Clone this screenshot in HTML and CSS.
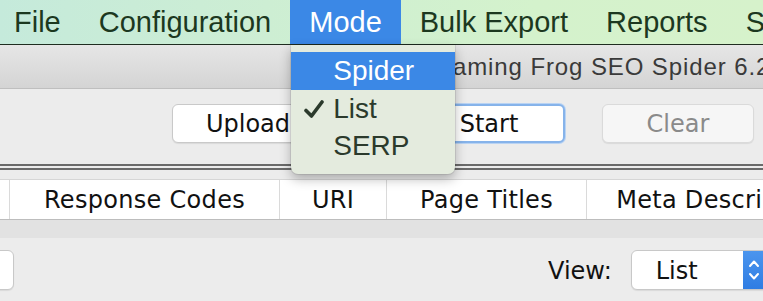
FILE: index.html
```html
<!DOCTYPE html>
<html>
<head>
<meta charset="utf-8">
<link rel="stylesheet" href="styles.css">
</head>
<body>
<div class="app">
  <nav class="menubar">
    <div class="mitem first">File</div>
    <div class="mitem">Configuration</div>
    <div class="mitem active">Mode
      <div class="dropdown">
        <div class="ditem hl"><span class="chk"></span>Spider</div>
        <div class="ditem"><span class="chk"><svg width="20" height="18" viewBox="0 0 20 18"><path d="M2 10.5 L7.5 16 L18 2" fill="none" stroke="#2b3a2c" stroke-width="3.6" stroke-linecap="round" stroke-linejoin="round"/></svg></span>List</div>
        <div class="ditem"><span class="chk"></span>SERP</div>
      </div>
    </div>
    <div class="mitem">Bulk Export</div>
    <div class="mitem">Reports</div>
    <div class="mitem">Sitemaps</div>
  </nav>
  <div class="titlebar">Screaming Frog SEO Spider 6.2</div>
  <div class="toolbar">
    <button class="btn upload">Upload</button>
    <button class="btn start">Start</button>
    <button class="btn clear">Clear</button>
  </div>
  <div class="split"></div>
  <div class="tabs">
    <div class="tab t0"></div>
    <div class="tab t1">Response Codes</div>
    <div class="tab t2">URI</div>
    <div class="tab t3">Page Titles</div>
    <div class="tab t4">Meta Description</div>
  </div>
  <div class="band"></div>
  <div class="bottom">
    <div class="field"></div>
    <div class="viewlabel">View:</div>
    <div class="select">
      <span class="seltext">List</span>
      <span class="stepper"><svg width="14" height="26" viewBox="0 0 14 26"><path d="M3 9 L7 4.5 L11 9" fill="none" stroke="#fff" stroke-width="2" stroke-linecap="round" stroke-linejoin="round"/><path d="M3 17 L7 21.5 L11 17" fill="none" stroke="#fff" stroke-width="2" stroke-linecap="round" stroke-linejoin="round"/></svg></span>
    </div>
  </div>
</div>
</body>
</html>
```
FILE: styles.css
```css
html, body {
  margin: 0;
  padding: 0;
  background: #ececec;
  overflow: hidden;
}
.app {
  width: 763px;
  height: 301px;
  overflow: hidden;
  position: relative;
}
.menubar {
  display: flex;
  height: 44px;
  border-bottom: 1px solid #1f2d20;
  background: linear-gradient(90deg, #c5eadb 0%, #cdeed3 35%, #d4f2cc 70%, #d6f2cb 100%);
  font-family: "Liberation Sans", Arial, sans-serif;
  font-size: 29px;
  color: #1c381f;
  white-space: nowrap;
  position: relative;
  z-index: 2;
}
.mitem {
  padding: 0 19px;
  line-height: 44px;
  position: relative;
  flex: none;
}
.mitem.first {
  padding-left: 14px;
}
.mitem.active {
  background: #3b88e6;
  color: #fff;
}
.dropdown {
  position: absolute;
  top: 45px;
  left: 1px;
  width: 164px;
  padding: 7px 0 9px;
  background: #e4ebde;
  border-radius: 0 0 7px 7px;
  box-shadow: 0 5px 12px rgba(0,0,0,0.28), 0 0 0 1px rgba(0,0,0,0.08);
  color: #2b3a2c;
  font-size: 28px;
}
.ditem {
  display: flex;
  align-items: center;
  height: 37.5px;
  line-height: 37.5px;
}
.ditem.hl {
  background: #3b88e6;
  color: #fff;
}
.chk {
  width: 42px;
  flex: none;
  display: flex;
  justify-content: flex-end;
  box-sizing: border-box;
}
.chk svg {
  margin-right: 9px;
  margin-top: 1px;
}
.titlebar {
  height: 43px;
  line-height: 44px;
  border-bottom: 1px solid #bfbfbf;
  background: linear-gradient(180deg, #e6e6e6, #d4d4d4);
  font-family: "Liberation Sans", Arial, sans-serif;
  font-size: 24px;
  letter-spacing: 0.9px;
  color: #3a3a3a;
  padding-left: 400px;
  white-space: nowrap;
}
.toolbar {
  display: flex;
  align-items: flex-start;
  height: 58px;
  padding-top: 15px;
  background: #ececec;
}
.btn {
  flex: none;
  width: 152px;
  height: 39px;
  box-sizing: border-box;
  border: 1px solid #c9c9c9;
  border-radius: 6px;
  background: #fff;
  box-shadow: 0 1px 1px rgba(0,0,0,0.08);
  font-family: "DejaVu Sans", sans-serif;
  font-size: 24px;
  color: #111;
  padding: 0;
  margin: 0;
}
.upload {
  margin-left: 172px;
}
.start {
  margin-left: 89px;
  border: 2px solid #86b3ea;
  box-shadow: 0 0 0 1px #b9d3f3;
}
.clear {
  margin-left: 37px;
  background: #f6f6f6;
  border-color: #dadada;
  color: #8a8a8a;
}
.split {
  height: 2px;
  border-top: 2px solid #6a6a6a;
  border-bottom: 2px solid #6a6a6a;
  margin-top: 2px;
  margin-bottom: 9px;
  background: #ececec;
}
.tabs {
  display: flex;
  height: 39px;
  border-top: 1px solid #d6d6d6;
  border-bottom: 1px solid #bdbdbd;
  background: #fff;
  font-family: "DejaVu Sans", sans-serif;
  font-size: 24px;
  letter-spacing: 0.3px;
  color: #111;
  white-space: nowrap;
}
.tab {
  flex: none;
  border-right: 1px solid #dadada;
  text-align: center;
  line-height: 41px;
  height: 39px;
  box-sizing: border-box;
  overflow: hidden;
}
.t0 { width: 10px; }
.t1 { width: 270px; }
.t2 { width: 107px; }
.t3 { width: 200px; }
.t4 { width: 268px; }
.band {
  height: 18px;
  background: #e2e2e2;
}
.bottom {
  display: flex;
  height: 65px;
  padding-top: 12px;
  box-sizing: border-box;
  align-items: flex-start;
  font-family: "DejaVu Sans", sans-serif;
  font-size: 24px;
  color: #111;
}
.field {
  flex: none;
  width: 40px;
  margin-left: -26px;
  height: 40px;
  box-sizing: border-box;
  background: #fff;
  border: 1px solid #c8c8c8;
  border-radius: 6px;
  box-shadow: 0 1px 1px rgba(0,0,0,0.08);
}
.viewlabel {
  flex: none;
  margin-left: 534px;
  line-height: 42px;
}
.select {
  flex: none;
  margin-left: 19px;
  width: 150px;
  height: 40px;
  box-sizing: border-box;
  display: flex;
  background: #fff;
  border: 1px solid #c8c8c8;
  border-radius: 6px;
  box-shadow: 0 1px 1px rgba(0,0,0,0.08);
  overflow: hidden;
}
.seltext {
  flex: none;
  width: 111px;
  padding-left: 24px;
  box-sizing: border-box;
  line-height: 40px;
}
.stepper {
  flex: none;
  width: 40px;
  background: linear-gradient(180deg, #4b95ee, #2f7de3);
  display: flex;
  align-items: center;
  padding-left: 4px;
  box-sizing: border-box;
}
```
